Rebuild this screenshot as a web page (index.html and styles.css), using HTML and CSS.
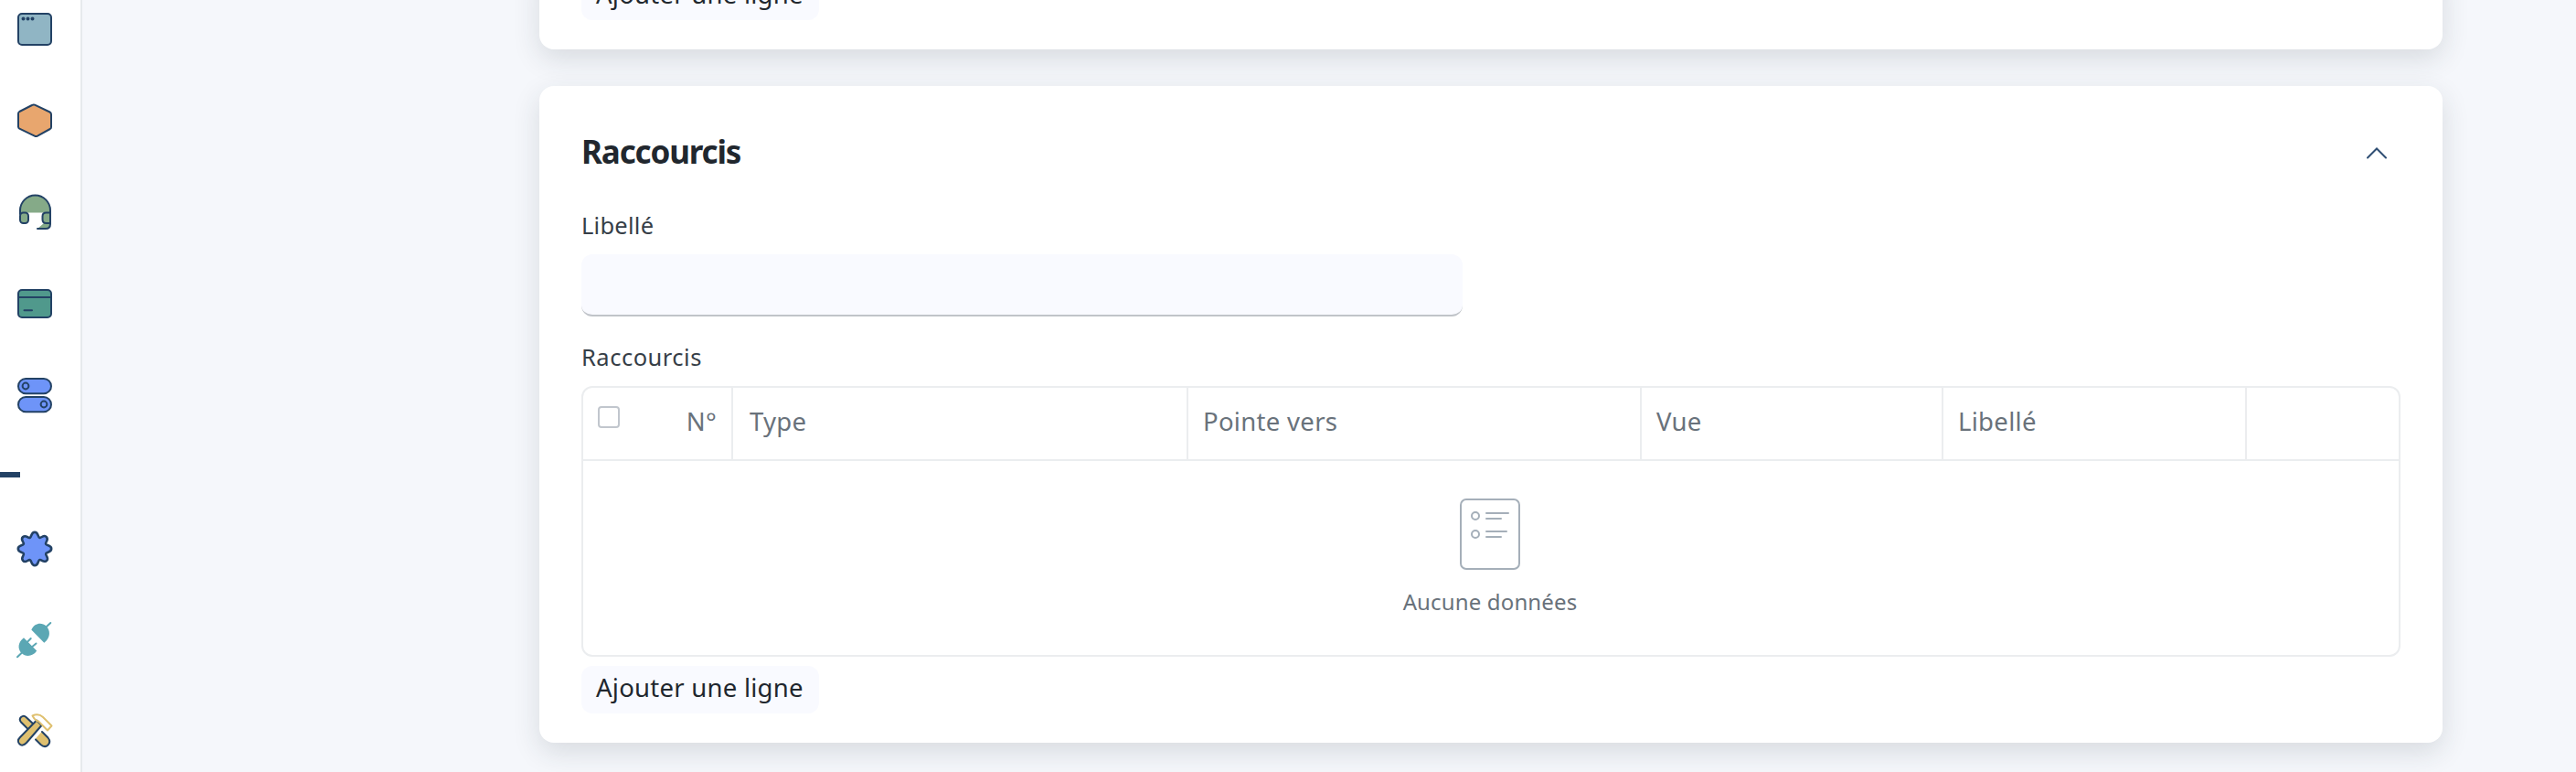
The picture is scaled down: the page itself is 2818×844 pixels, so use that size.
FILE: index.html
```html
<!DOCTYPE html>
<html lang="fr">
<head>
<meta charset="utf-8">
<title>Raccourcis</title>
<link rel="stylesheet" href="styles.css">
</head>
<body>
<div class="app">
  <nav class="sidebar">
    <a class="nav-item"><svg viewBox="0 0 40 40"><g class="ink"><rect x="2" y="3" width="36" height="34" rx="4" fill="#90b5c4"/><circle cx="7.5" cy="8.5" r="1" /><circle cx="12.5" cy="8.5" r="1"/><circle cx="17.5" cy="8.5" r="1"/></g></svg></a>
    <a class="nav-item"><svg viewBox="0 0 40 40"><path class="ink" fill="#e8a66e" d="M17 3Q18.500 2 20 2.700L36.500 10.500Q38 11.300 38 13V27Q38 28.300 36.800 29L23 36.600Q21.400 37.400 19.800 36.600L3.300 28.600Q2 27.800 2 26.400V12.200Q2 10.800 3.300 10Z"/></svg></a>
    <a class="nav-item"><svg viewBox="0 0 40 40"><path fill="#85aa88" d="M4 20.500C4 8 12 2 20.500 2S37 8 37 20.500ZM23 38l7-6h7v2q0 4-4 4z"/><path class="ink" fill="none" d="M4 22V18a16.500 16.500 0 0 1 33 0V33q0 5-5 5H23"/><rect class="ink" x="4" y="20.500" width="9" height="11.500" rx="3.500" fill="#85aa88"/><path class="ink" fill="#85aa88" d="M37 20.500H32.500q-4 0-4 4V28q0 4 4 4H37Z"/></svg></a>
    <a class="nav-item"><svg viewBox="0 0 40 40"><g class="ink"><rect x="2" y="5" width="36" height="30" rx="4" fill="#50998c"/><path d="M2 13H38M8.500 27.300h8.500"/></g></svg></a>
    <a class="nav-item"><svg viewBox="0 0 40 40"><g class="ink" fill="#6e94f8"><rect x="2" y="2" width="36" height="16.300" rx="8.150"/><rect x="2" y="22" width="36" height="16.300" rx="8.150"/><circle cx="10" cy="10" r="3.400"/><circle cx="30" cy="30" r="3.400"/></g></svg></a>
    <div class="nav-separator"></div>
    <a class="nav-item"><svg viewBox="0 0 40 40"><path class="ink gear" fill="#6e94f8" d="M20 1.800C24 1.800 23.200 7 25.200 7.800S30 3.700 32.900 7.100S31 12.800 32.200 14.800S38.200 16 38.200 20S33 23.200 32.200 25.200S36.300 30 32.900 32.900S27.200 31 25.200 32.200S24 38.200 20 38.200S16.800 33 14.800 32.200S10 36.300 7.100 32.900S9 27.200 7.800 25.200S1.800 24 1.800 20S7 16.800 7.800 14.800S3.700 10 7.100 7.100S12.800 9 14.800 7.800S16 1.800 20 1.800Z"/></svg></a>
    <a class="nav-item"><svg viewBox="0 0 40 40"><g fill="#5ba7b4" stroke="#5ba7b4" stroke-width="2" stroke-linecap="round"><path stroke="none" d="M16.300 8.600C20 .5 28 .3 32.500 4.500S38 17 30.300 22.700ZM8 17.300L22.200 31.500C18 38 10 38.500 5.500 34S1.500 22 8 17.300Z"/><path d="M33 5l4.300-4M5.500 34L1 38.300M12 21.700L15.700 18M17.300 27L21.500 23.500"/></g></svg></a>
    <a class="nav-item"><svg viewBox="0 0 40 40"><path class="ink" fill="#dfc06f" d="M14.500 19L5 9.500Q2.500 6.500 5 4Q8 1.500 10.500 4L19.500 12.500"/><path class="ink" fill="#dfc06f" d="M22 7.500L27.500 13L11 32Q6.500 36.500 3.500 33.500Q0 30 4 26Z"/><path fill="none" stroke="#dfc06f" stroke-width="2" stroke-linejoin="round" d="M17.500 2.500Q24-.5 29 4L38.500 13.500L34 18.500L24 8.500Q20.500 8 17.500 2.500Z"/><path fill="#dfc06f" d="M20.500 28L28 19.500L34.500 26Q38 31 34.500 34.500Q31 38 26.500 34Z"/><path class="ink" fill="none" d="M28 20L34.500 26.500Q38 31 34.500 34.500Q31 38 26.500 34L21 28.500"/></svg></a>
  </nav>
  <main class="content">
    <section class="card card-previous">
      <button class="add-row">Ajouter une ligne</button>
    </section>
    <section class="card">
      <header class="card-header">
        <h2 class="card-title">Raccourcis</h2>
        <svg class="chevron" viewBox="0 0 24 14"><path d="M2 11.500L12 1.500L22 11.500"/></svg>
      </header>
      <label class="field-label libelle" for="libelle">Libellé</label>
      <input class="text-input" id="libelle" type="text">
      <div class="field-label">Raccourcis</div>
      <div class="grid">
        <div class="grid-head">
          <div class="cell cell-index"><span class="checkbox"></span><span class="num">N°</span></div>
          <div class="cell type">Type</div>
          <div class="cell">Pointe vers</div>
          <div class="cell">Vue</div>
          <div class="cell">Libellé</div>
          <div class="cell"></div>
        </div>
        <div class="grid-empty">
          <svg class="empty-icon" viewBox="0 0 66 78"><rect x="1" y="1" width="64" height="76" rx="6"/><circle cx="17" cy="19" r="4"/><circle cx="17" cy="39" r="4"/><path d="M29 16H53M29 22H45M29 36H51M29 42H45"/></svg>
          <span class="empty-text">Aucune données</span>
        </div>
      </div>
      <button class="add-row">Ajouter une ligne</button>
    </section>
  </main>
</div>
</body>
</html>
```
FILE: styles.css
```css
* { box-sizing: border-box; }
body {
  margin: 0;
  background: #f5f7fb;
  color: #21272e;
  font-family: "Noto Sans", sans-serif;
}
.app { display: flex; height: 844px; overflow: hidden; }
.sidebar {
  width: 90px;
  flex: none;
  height: 900px;
  margin-top: -18px;
  background: #fff;
  border-right: 2px solid #e6eaed;
}
.nav-item {
  display: flex;
  align-items: center;
  height: 100px;
  padding-left: 18px;
}
.nav-item svg { width: 40px; height: 40px; overflow: visible; }
.ink { stroke: #234265; stroke-width: 2; stroke-linecap: round; stroke-linejoin: round; }
.gear { stroke-width: 2.6; }
.nav-separator { height: 68px; padding-top: 34px; }
.nav-separator::before { content: ""; display: block; width: 22px; height: 6px; background: #234265; }

.content {
  display: flex;
  flex-direction: column;
  gap: 40px;
  width: 2082px;
  margin-left: 500px;
  flex: none;
}
.card {
  height: 718px;
  flex: none;
  padding: 47px 46px 0;
  border-radius: 16px;
  background: #fff;
  box-shadow: 0 10px 30px rgba(33, 50, 60, .14);
}
.card-previous { height: 94px; margin-top: -40px; padding-top: 10px; }

.card-header {
  display: flex;
  align-items: center;
  justify-content: space-between;
  height: 48px;
  margin-bottom: 39px;
}
.card-title { margin: 2px 0 0; font-size: 35px; line-height: 48px; font-weight: 700; letter-spacing: -1.15px; }
.chevron { width: 24px; height: 14px; margin: 6px 14px 0 0; }
.chevron path { fill: none; stroke: #2f4e73; stroke-width: 2; stroke-linecap: round; }

.field-label { display: block; height: 36px; font-size: 25.500px; line-height: 37px; letter-spacing: .5px; color: #363e47; }
.field-label.libelle { letter-spacing: .25px; }
.text-input {
  display: block;
  width: 964px;
  height: 68px;
  margin: 14px 0 26px;
  padding: 0 16px;
  border: 0;
  border-bottom: 2px solid #c0c4c9;
  border-radius: 12px;
  background: #f9faff;
  font: inherit;
}

.grid {
  height: 296px;
  margin: 14px 0 10px;
  border: 2px solid #ebedef;
  border-radius: 12px;
}
.grid-head {
  display: grid;
  grid-template-columns: 164px 498px 496px 330px 332px 1fr;
  height: 80px;
  border-bottom: 2px solid #ebedef;
}
.cell {
  padding: 0 16px;
  border-right: 2px solid #ebedef;
  font-size: 27.500px;
  line-height: 73px;
  letter-spacing: .3px;
  color: #69727b;
}
.cell.type { padding-left: 18px; }
.cell:last-child { border-right: 0; }
.cell-index { display: flex; justify-content: space-between; }
.checkbox { width: 24px; height: 24px; margin-top: 20px; border: 2px solid #c1c6cd; border-radius: 4px; }
.grid-empty { display: flex; flex-direction: column; align-items: center; gap: 18px; padding: 41px 2px 0 0; }
.empty-icon { width: 66px; height: 78px; }
.empty-icon * { fill: none; stroke: #a5afb9; stroke-width: 2; stroke-linecap: round; }
.empty-text { font-size: 24px; line-height: 34px; letter-spacing: .15px; color: #69727b; }

.add-row {
  display: block;
  width: 260px;
  height: 52px;
  padding: 0 0 4px 16px;
  border: 0;
  border-radius: 12px;
  background: #f9faff;
  color: #21272e;
  font-family: inherit;
  font-size: 27.500px;
  line-height: 48px;
  letter-spacing: .25px;
  text-align: left;
  white-space: nowrap;
}
```
